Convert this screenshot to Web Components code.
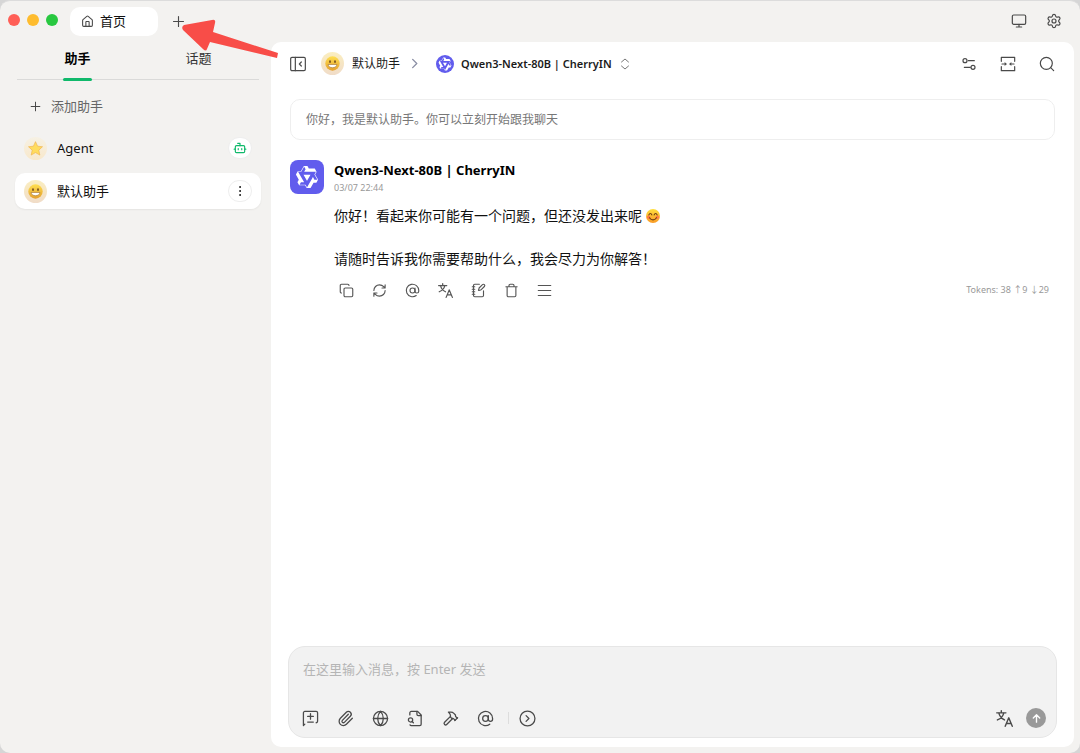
<!DOCTYPE html>
<html lang="zh-CN">
<head>
<meta charset="utf-8">
<title>首页</title>
<style>
  html, body { height: 100%; }
  body {
    margin: 0;
    background: #d6d6d6;
    color: #1b1b1b;
    font-family: "Noto Sans", "Noto Sans CJK SC", sans-serif;
    font-size: 13px;
    line-height: 20px;
    --green: #10b96b;
    --icon: #4a4a4a;
  }
</style>
</head>
<body>
<chat-app></chat-app>

<script>
// 24x24 line icons
const ICONS = {
  home: '<path d="M15 21v-8a1 1 0 0 0-1-1h-4a1 1 0 0 0-1 1v8"/><path d="M3 10a2 2 0 0 1 .709-1.528l7-5.999a2 2 0 0 1 2.582 0l7 5.999A2 2 0 0 1 21 10v9a2 2 0 0 1-2 2H5a2 2 0 0 1-2-2z"/>',
  plus: '<path d="M4 12h16M12 4v16"/>',
  monitor: '<rect x="2" y="3" width="20" height="14" rx="2"/><path d="M8 21h8M12 17v4"/>',
  settings: '<path d="M9.671 4.136a2.34 2.34 0 0 1 4.659 0 2.34 2.34 0 0 0 3.319 1.915 2.34 2.34 0 0 1 2.33 4.033 2.34 2.34 0 0 0 0 3.831 2.34 2.34 0 0 1-2.33 4.033 2.34 2.34 0 0 0-3.319 1.915 2.34 2.34 0 0 1-4.659 0 2.34 2.34 0 0 0-3.32-1.915 2.34 2.34 0 0 1-2.33-4.033 2.34 2.34 0 0 0 0-3.831A2.34 2.34 0 0 1 6.35 6.051a2.34 2.34 0 0 0 3.319-1.915"/><circle cx="12" cy="12" r="3"/>',
  panel: '<rect x="1" y="2" width="22" height="20" rx="2"/><path d="M8 2v20M17 15l-3-3 3-3"/>',
  chevron: '<path d="m8 21 9-9-9-9"/>',
  updown: '<path d="m5 16 7 6 7-6M5 8l7-6 7 6"/>',
  sliders: '<path d="M20 7h-9M14 17H5"/><circle cx="18" cy="17" r="3"/><circle cx="6" cy="7" r="3"/>',
  width: '<path d="M2 8V2h20v6M2 16v6h20v-6M3 12h6M15 12h6"/><path fill="currentColor" stroke="none" d="M7 9l3 3-3 3zM17 9l-3 3 3 3z"/>',
  search: '<circle cx="11" cy="11" r="9"/><path d="m22 22-4.500-4.500"/>',
  bot: '<path d="M12 8V4H8"/><rect x="4" y="8" width="16" height="12" rx="2"/><path d="M2 14h2M20 14h2M15 13v2M9 13v2"/>',
  dots: '<g fill="currentColor"><circle cx="12" cy="4" r="1"/><circle cx="12" cy="12" r="1"/><circle cx="12" cy="20" r="1"/></g>',
  copy: '<rect x="8" y="8" width="14" height="14" rx="2"/><path d="M4 16c-1.100 0-2-.9-2-2V4c0-1.100.9-2 2-2h10c1.100 0 2 .9 2 2"/>',
  refresh: '<path d="M3 12a9 9 0 0 1 9-9 9.750 9.750 0 0 1 6.740 2.740L21 8M21 3v5h-5M21 12a9 9 0 0 1-9 9 9.750 9.750 0 0 1-6.740-2.740L3 16M8 16H3v5"/>',
  at: '<circle cx="12" cy="12" r="4"/><path d="M16 8v5a3 3 0 0 0 6 0v-1a10 10 0 1 0-4 8"/>',
  translate: '<g stroke-width="2"><path d="M1 4h13M7.500 1v3M2 14c5-2 8-5 9-10M4 4c1 5 4 8 8 10"/><path d="M23 23 18 11l-5 12M15 19h6"/></g>',
  note: '<path d="M13.400 2H6a2 2 0 0 0-2 2v16a2 2 0 0 0 2 2h12a2 2 0 0 0 2-2v-7.400M2 6h4M2 10h4M2 14h4M2 18h4"/><path d="M21.378 5.626a1 1 0 1 0-3.004-3.004l-5.010 5.012a2 2 0 0 0-.506.854l-.837 2.870a.5.5 0 0 0 .62.62l2.870-.837a2 2 0 0 0 .854-.506z"/>',
  trash: '<path d="M3 6h18M19 6v14c0 1-1 2-2 2H7c-1 0-2-1-2-2V6M8 6V4c0-1 1-2 2-2h4c1 0 2 1 2 2v2"/>',
  menu: '<path d="M2 4h20M2 12h20M2 20h20"/>',
  newtopic: '<path d="M4 20l-2 2V4a2 2 0 0 1 2-2h16a2 2 0 0 1 2 2v12a2 2 0 0 1-2 2M8 9h8M12 5v8M8 17h8"/>',
  clip: '<path d="m16 6-8.414 8.586a2 2 0 0 0 2.829 2.829l8.414-8.586a4 4 0 1 0-5.657-5.657l-8.379 8.551a6 6 0 1 0 8.485 8.485l8.379-8.551"/>',
  globe: '<circle cx="12" cy="12" r="10"/><path d="M12 2a14.500 14.500 0 0 0 0 20 14.500 14.500 0 0 0 0-20M2 12h20"/>',
  filesearch: '<path d="M14 2v4a2 2 0 0 0 2 2h4"/><path d="M4.268 21a2 2 0 0 0 1.727 1H18a2 2 0 0 0 2-2V7l-5-5H6a2 2 0 0 0-2 2v3M9 18l-1.500-1.500"/><circle cx="5" cy="14" r="3"/>',
  hammer: '<path d="m15 12-8.373 8.373a1 1 0 1 1-3-3L12 9M18 15l4-4"/><path d="m21.500 11.500-1.914-1.914A2 2 0 0 1 19 8.172V7l-2.260-2.260a6 6 0 0 0-4.202-1.756L9 2.960l.92.82A6.180 6.180 0 0 1 12 8.400V10l2 2h1.172a2 2 0 0 1 1.414.586L18.500 14.500"/>',
  more: '<circle cx="12" cy="12" r="10.500"/><path d="m10 8 4 4-4 4"/>',
  up: '<path d="M12 20V4M5 11l7-7 7 7"/>'
}

const QWEN = 'M12.604 1.340c.393.690.784 1.382 1.174 2.075a.18.18 0 00.157.091h5.552c.174 0 .322.11.446.327l1.454 2.570c.19.337.24.478.024.837-.26.43-.513.864-.76 1.300l-.367.658c-.106.196-.223.28-.04.512l2.652 4.637c.172.301.111.494-.043.77-.437.785-.882 1.564-1.335 2.340-.159.272-.352.375-.68.37-.777-.016-1.552-.01-2.327.016a.099.099 0 00-.081.05 575.097 575.097 0 01-2.705 4.740c-.169.293-.38.363-.725.364-.997.003-2.002.004-3.017.002a.537.537 0 01-.465-.271l-1.335-2.323a.09.09 0 00-.083-.049H4.982c-.285.03-.553-.001-.805-.092l-1.603-2.770a.543.543 0 01-.002-.54l1.207-2.120a.198.198 0 000-.197 550.951 550.951 0 01-1.875-3.272l-.79-1.395c-.16-.31-.173-.496.095-.965.465-.813.927-1.625 1.387-2.436.132-.234.304-.334.584-.335a338.300 338.300 0 012.589-.001.124.124 0 00.107-.063l2.806-4.895a.488.488 0 01.422-.246c.524-.001 1.053 0 1.583-.006L11.704 1c.341-.003.724.032.9.34zm-3.432.403a.06.06 0 00-.052.03L6.254 6.788a.157.157 0 01-.135.078H3.253c-.056 0-.07.025-.041.074l5.810 10.156c.025.042.013.062-.034.063l-2.795.015a.218.218 0 00-.2.116l-1.320 2.310c-.044.078-.021.118.068.118l5.716.008c.046 0 .08.02.104.061l1.403 2.454c.046.081.092.082.139 0l5.006-8.760.783-1.382a.055.055 0 01.096 0l1.424 2.530a.122.122 0 00.107.062l2.763-.02a.04.04 0 00.035-.02.041.041 0 000-.04l-2.900-5.086a.108.108 0 010-.113l.293-.507 1.120-1.977c.024-.041.012-.062-.035-.062H9.200c-.059 0-.073-.026-.043-.077l1.434-2.505a.107.107 0 000-.114L9.225 1.774a.06.06 0 00-.053-.031zm6.290 8.020c.046 0 .058.02.034.06l-.832 1.465-2.613 4.585a.056.056 0 01-.05.029.058.058 0 01-.05-.029L8.498 9.841c-.02-.034-.01-.052.028-.054l.216-.012 6.722-.012z'

class BaseElement extends HTMLElement {
  constructor() {
    super()
    this.attachShadow({ mode: 'open' })
    this.render()
  }

  render() {
    var template = document.createElement('template')
    template.innerHTML = `<style>* { box-sizing: border-box; }${this.styles()}</style>${this.html()}`
    this.shadowRoot.appendChild(template.content.cloneNode(true))
  }

  styles() { return '' }
  html() { return '' }
}

class UiIcon extends HTMLElement {
  constructor() {
    super()
    this.attachShadow({ mode: 'open' })
  }

  connectedCallback() {
    this.shadowRoot.innerHTML = `
      <style>
        :host { display: inline-flex; flex: none; width: var(--size, 18px); height: var(--size, 18px); }
        svg { width: 100%; height: 100%; fill: none; stroke: currentColor; stroke-width: var(--stroke, 1.800); stroke-linecap: round; stroke-linejoin: round; overflow: visible; }
      </style>
      <svg viewBox="0 0 24 24" aria-hidden="true">${ICONS[this.getAttribute('name')]}</svg>`
  }
}

class IconButton extends HTMLElement {
  constructor() {
    super()
    this.attachShadow({ mode: 'open' })
  }

  connectedCallback() {
    this.shadowRoot.innerHTML = `
      <style>
        :host { display: inline-flex; flex: none; color: var(--icon); }
        button { display: flex; padding: 0; border: 0; background: none; color: inherit; cursor: pointer; }
      </style>
      <button type="button" aria-label="${this.getAttribute('label')}"><ui-icon name="${this.getAttribute('icon')}"></ui-icon></button>`
  }
}

class EmojiAvatar extends BaseElement {
  styles() {
    return `
      :host { display: inline-flex; flex: none; width: 23px; height: 23px; border-radius: 50%; background: linear-gradient(#fbeec0, #f0dcc8); align-items: center; justify-content: center; }
      :host([soft]) { background: linear-gradient(#f6f1e4, #f8e8cb); }
      svg { width: 15px; height: 15px; }
      .star, :host([soft]) .face { display: none; }
      :host([soft]) .star { display: block; }`
  }

  html() {
    return `
      <svg class="star" viewBox="0 0 24 24" aria-hidden="true">
        <path fill="#ffdc5e" stroke="#efb04a" stroke-width="1" stroke-linejoin="round" d="m12 1 3.300 7.300 7.900.9-5.900 5.400 1.600 7.900L12 18.500l-6.900 4 1.600-7.900L.8 9.200l7.900-.9z"/>
      </svg>
      <svg class="face" viewBox="0 0 24 24" aria-hidden="true">
        <defs><linearGradient id="g" x2="0" y2="1"><stop stop-color="#ffdf50"/><stop offset="1" stop-color="#e5a02f"/></linearGradient></defs>
        <circle cx="12" cy="12" r="11.500" fill="url(#g)"/>
        <ellipse cx="8" cy="9" rx="1.500" ry="2.200" fill="#7d5520"/><ellipse cx="16" cy="9" rx="1.500" ry="2.200" fill="#7d5520"/>
        <path fill="#fff" stroke="#a0702c" d="M5 13.500h14c0 7-14 7-14 0z"/>
      </svg>`
  }
}

class QwenLogo extends BaseElement {
  styles() {
    return `
      :host { display: inline-flex; flex: none; width: 18px; height: 18px; padding: 2px; border-radius: 50%; background: #615ced; box-sizing: border-box; }
      :host([large]) { width: 34px; height: 34px; padding: 5px; border-radius: 8px; }
      svg { width: 100%; height: 100%; fill: #fff; }`
  }

  html() {
    return `<svg viewBox="0 0 24 24" aria-hidden="true"><path d="${QWEN}"/></svg>`
  }
}

class TitleBar extends BaseElement {
  styles() {
    return `
      :host { display: flex; align-items: center; height: 42px; padding: 0 18px 0 8px; }
      .lights { display: flex; gap: 7px; padding: 0 12px 2px 0; }
      .lights i { width: 12px; height: 12px; border-radius: 50%; background: #ff5f57; }
      .lights i:nth-child(2) { background: #febc2e; }
      .lights i:nth-child(3) { background: #28c840; }
      .tab { display: flex; align-items: center; gap: 6px; width: 88px; height: 29px; padding: 0 11px; border: 0; border-radius: 10px; background: #fff; color: #111; font: inherit; --size: 13px; }
      .tab ui-icon { color: var(--icon); --stroke: 2; }
      .add { margin-left: 13px; --size: 15px; }
      .right { display: flex; gap: 19px; margin-left: auto; --size: 16px; }`
  }

  html() {
    return `
      <div class="lights"><i></i><i></i><i></i></div>
      <button class="tab" type="button"><ui-icon name="home"></ui-icon>首页</button>
      <icon-button class="add" icon="plus" label="新标签页"></icon-button>
      <div class="right">
        <icon-button icon="monitor" label="主题"></icon-button>
        <icon-button icon="settings" label="设置"></icon-button>
      </div>`
  }
}

class AssistantItem extends BaseElement {
  styles() {
    return `
      :host { display: flex; align-items: center; gap: 10px; height: 36px; padding: 0 9px; border-radius: 10px; color: #111; box-sizing: border-box; }
      :host([active]) { background: #fff; box-shadow: 0 1px 2px rgba(0, 0, 0, 0.06); }
      .badge { margin-left: auto; }`
  }

  html() {
    return '<slot name="avatar"></slot><slot></slot><slot class="badge" name="badge"></slot>'
  }
}

class SideBar extends BaseElement {
  styles() {
    return `
      :host { display: flex; flex-direction: column; width: 271px; flex: none; padding: 0 10px 0 15px; box-sizing: border-box; }
      nav { display: flex; margin: 0 2px 8px; height: 38px; border-bottom: 1px solid #dadad9; }
      nav button { flex: 1; display: flex; flex-direction: column; align-items: center; justify-content: space-between; padding: 6px 0 0; margin-bottom: -2px; border: 0; background: none; color: #333; font: inherit; }
      nav button::after { content: ''; width: 29px; height: 3px; border-radius: 2px; }
      nav .on { color: #000; font-weight: 700; }
      nav .on::after { background: var(--green); }
      .add { display: flex; align-items: center; gap: 9px; height: 36px; padding: 0 14px; border: 0; background: none; color: #666; font: inherit; --size: 13px; }
      .add ui-icon { color: #444; }
      .list { display: flex; flex-direction: column; gap: 7px; margin-top: 6px; }
      .pill { display: flex; align-items: center; justify-content: center; width: 24px; height: 22px; margin-left: auto; padding: 0; border: 1px solid #eee; border-radius: 11px; background: #fff; color: #222; --size: 12px; --stroke: 2; }
      .bot { color: var(--green); --size: 14px; }`
  }

  html() {
    return `
      <nav><button class="on" type="button">助手</button><button type="button">话题</button></nav>
      <button class="add" type="button"><ui-icon name="plus"></ui-icon>添加助手</button>
      <div class="list">
        <assistant-item>
          <emoji-avatar slot="avatar" soft></emoji-avatar>Agent
          <button class="pill bot" slot="badge" type="button" aria-label="智能体"><ui-icon name="bot"></ui-icon></button>
        </assistant-item>
        <assistant-item active>
          <emoji-avatar slot="avatar"></emoji-avatar>默认助手
          <button class="pill" slot="badge" type="button" aria-label="更多"><ui-icon name="dots"></ui-icon></button>
        </assistant-item>
      </div>`
  }
}

class ChatHeader extends BaseElement {
  styles() {
    return `
      :host { display: flex; align-items: center; height: 43px; padding: 0 19px; font-size: 12px; --size: 16px; }
      emoji-avatar { margin: 0 8px 0 15px; }
      .arrow { margin: 0 16px 0 9px; color: #8b8fa5; --size: 11px; --stroke: 3; }
      .model { display: flex; align-items: center; gap: 7px; padding: 0; border: 0; background: none; color: #1b1b1b; font: inherit; font-size: 11px; font-weight: 600; }
      .model ui-icon { color: #777; --size: 12px; --stroke: 2; }
      .tools { display: flex; gap: 23px; margin-left: auto; }`
  }

  html() {
    return `
      <icon-button icon="panel" label="收起侧边栏"></icon-button>
      <emoji-avatar></emoji-avatar>默认助手
      <ui-icon class="arrow" name="chevron"></ui-icon>
      <button class="model" type="button"><qwen-logo></qwen-logo>Qwen3-Next-80B | CherryIN<ui-icon name="updown"></ui-icon></button>
      <div class="tools">
        <icon-button icon="sliders" label="参数设置"></icon-button>
        <icon-button icon="width" label="宽度"></icon-button>
        <icon-button icon="search" label="搜索"></icon-button>
      </div>`
  }
}

class ChatMessage extends BaseElement {
  styles() {
    return `
      :host { display: grid; grid-template-columns: 34px 1fr; column-gap: 10px; }
      h2 { margin: 0; color: #000; font-size: 13px; line-height: 20px; font-weight: 700; }
      time { display: block; color: #999; font-size: 9px; line-height: 16px; }
      .body { grid-column: 2; margin-top: 8px; color: #111; font-size: 14px; line-height: 23px; }
      p { margin: 0 0 20px; }
      p:last-child { margin: 0; }
      .smile { width: 14px; height: 14px; vertical-align: -2px; }
      footer { grid-column: 2; display: flex; align-items: center; gap: 18px; margin-top: 12px; padding: 0 6px 0 5px; --size: 15px; --icon: #555; }
      small { margin-left: auto; color: #999; font-size: 9px; line-height: 16px; white-space: pre; }`
  }

  html() {
    return `
      <qwen-logo large></qwen-logo>
      <div><h2>Qwen3-Next-80B | CherryIN</h2><time>03/07 22:44</time></div>
      <div class="body">
        <p>你好！看起来你可能有一个问题，但还没发出来呢 <svg class="smile" viewBox="0 0 24 24" aria-label="😊"><defs><linearGradient id="s" x2="0" y2="1"><stop stop-color="#ffdf3d"/><stop offset="1" stop-color="#f99b26"/></linearGradient></defs><circle cx="12" cy="12" r="12" fill="url(#s)"/><circle cx="4.500" cy="14" r="3" fill="#ff7b45"/><circle cx="19.500" cy="14" r="3" fill="#ff7b45"/><path d="M5 10c1-3 4-3 5 0M14 10c1-3 4-3 5 0M6 15c3 5 9 5 12 0" fill="none" stroke="#713f12" stroke-width="2" stroke-linecap="round"/></svg></p>
        <p>请随时告诉我你需要帮助什么，我会尽力为你解答！</p>
      </div>
      <footer>
        <icon-button icon="copy" label="复制"></icon-button>
        <icon-button icon="refresh" label="重新生成"></icon-button>
        <icon-button icon="at" label="切换模型"></icon-button>
        <icon-button icon="translate" label="翻译"></icon-button>
        <icon-button icon="note" label="保存到笔记"></icon-button>
        <icon-button icon="trash" label="删除"></icon-button>
        <icon-button icon="menu" label="更多"></icon-button>
        <small>Tokens: 38 ↑9 ↓29</small>
      </footer>`
  }
}

class ChatInput extends BaseElement {
  styles() {
    return `
      :host { display: flex; flex-direction: column; margin: 0 17px 9px; padding: 12px 10px 9px 14px; height: 92px; box-sizing: border-box; border: 1px solid #e6e6e6; border-radius: 17px; background: #f2f2f2; --size: 17px; }
      textarea { width: 100%; height: 20px; padding: 0; border: 0; outline: 0; resize: none; overflow: hidden; background: none; color: #111; font: inherit; line-height: 20px; }
      textarea::placeholder { color: #b5b5b5; }
      .bar { display: flex; align-items: center; gap: 18px; margin: auto 0 0 -1px; }
      hr { width: 1px; height: 12px; margin: 0 -8px 0 -4px; border: 0; background: #ddd; }
      .send { display: flex; align-items: center; justify-content: center; width: 20px; height: 20px; padding: 0; border: 0; border-radius: 50%; background: #999; color: #fff; --size: 11px; --stroke: 3; }
      .end { display: flex; align-items: center; gap: 13px; margin-left: auto; }`
  }

  html() {
    return `
      <textarea aria-label="消息" placeholder="在这里输入消息，按 Enter 发送"></textarea>
      <div class="bar">
        <icon-button icon="newtopic" label="新话题"></icon-button>
        <icon-button icon="clip" label="附件"></icon-button>
        <icon-button icon="globe" label="网络搜索"></icon-button>
        <icon-button icon="filesearch" label="知识库"></icon-button>
        <icon-button icon="hammer" label="工具"></icon-button>
        <icon-button icon="at" label="选择模型"></icon-button>
        <hr>
        <icon-button icon="more" label="展开"></icon-button>
        <div class="end">
          <icon-button icon="translate" label="翻译"></icon-button>
          <button class="send" type="button" aria-label="发送"><ui-icon name="up"></ui-icon></button>
        </div>
      </div>`
  }
}

class ChatApp extends BaseElement {
  styles() {
    return `
      :host { position: relative; display: flex; flex-direction: column; height: 100vh; box-sizing: border-box; border-top: 1px solid #dcdcdc; border-radius: 10px; overflow: hidden; background: #f3f2f0; }
      title-bar { flex: none; margin-top: -1px; }
      .row { display: flex; flex: 1; min-height: 0; }
      main { display: flex; flex-direction: column; flex: 1; min-width: 0; margin: 0 6px 6px 0; border-radius: 10px; background: #fff; }
      .prompt { margin: 14px 19px 20px; padding: 10px 15px; border: 1px solid #eee; border-radius: 10px; color: #777; font-size: 12px; line-height: 19px; }
      chat-message { margin: 0 19px; }
      chat-input { margin-top: auto; }
      /* arrow lying over the tab bar */
      .pointer { position: absolute; left: 181px; top: 18px; width: 98px; height: 40px; pointer-events: none; }`
  }

  html() {
    return `
      <title-bar></title-bar>
      <div class="row">
        <side-bar></side-bar>
        <main>
          <chat-header></chat-header>
          <div class="prompt">你好，我是默认助手。你可以立刻开始跟我聊天</div>
          <chat-message></chat-message>
          <chat-input></chat-input>
        </main>
      </div>
      <svg class="pointer" viewBox="0 0 98 40" aria-hidden="true"><path fill="#f84d48" d="M3 6 31 1q4-1 3 3l-2 9L97 34l-1 5-67-16-3 7q-1 3-4 0L2 11q-2-3 1-5z"/></svg>`
  }
}

customElements.define('ui-icon', UiIcon)
customElements.define('icon-button', IconButton)
customElements.define('emoji-avatar', EmojiAvatar)
customElements.define('qwen-logo', QwenLogo)
customElements.define('title-bar', TitleBar)
customElements.define('assistant-item', AssistantItem)
customElements.define('side-bar', SideBar)
customElements.define('chat-header', ChatHeader)
customElements.define('chat-message', ChatMessage)
customElements.define('chat-input', ChatInput)
customElements.define('chat-app', ChatApp)
</script>
</body>
</html>
